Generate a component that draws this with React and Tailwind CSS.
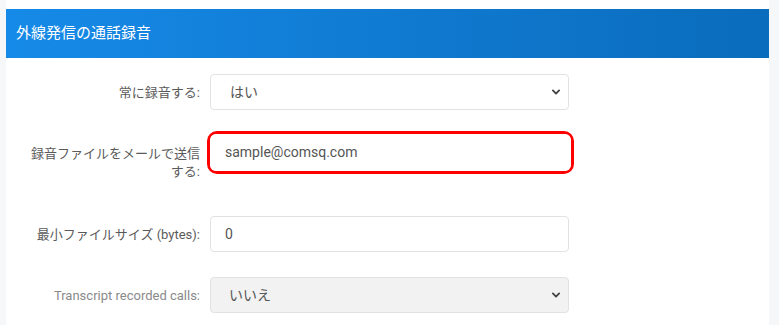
import React from "react";

const Chevron = () => (
  <svg
    className="pointer-events-none absolute right-[8px] top-1/2 h-[10px] w-[10px] -translate-y-1/2 text-[#444]"
    viewBox="0 0 16 16"
    fill="none"
    stroke="currentColor"
    strokeWidth="3"
    strokeLinecap="round"
    strokeLinejoin="round"
  >
    <path d="M3 5.5l5 5 5-5" />
  </svg>
);

function Row({ label, muted, children, className = "" }) {
  return (
    <div className={`flex items-start ${className}`}>
      <label
        className={`w-[194px] shrink-0 pl-[14px] pr-[10px] pt-[10px] text-right text-[13px] leading-[18px] ${
          muted ? "text-[#8a8a8a]" : "text-[#5a5a5a]"
        }`}
      >
        {label}
      </label>
      <div className="w-[359px]">{children}</div>
    </div>
  );
}

export default function App() {
  return (
    <div
      className="h-[325px] w-[779px] overflow-hidden bg-[#f6f7f9] pl-[6px] pr-[10px]"
      style={{ fontFamily: 'Roboto, "Noto Sans CJK JP", sans-serif' }}
    >
      <div className="h-full bg-white pt-[9px]">
        <div className="flex h-[49px] items-center bg-gradient-to-r from-[#168ae8] to-[#0a6cbc] px-[10px] text-[15px] text-white">
          外線発信の通話録音
        </div>

        <div className="pl-[10px] pt-[16px]">
          <Row label="常に録音する:">
            <div className="relative">
              <div className="flex h-[36px] items-center rounded-[4px] border border-[#e2e2e2] bg-white pl-[19px] text-[14px] text-[#555]">
                はい
              </div>
              <Chevron />
            </div>
          </Row>

          <Row label="録音ファイルをメールで送信する:" className="mt-[25px]">
            <div className="-mb-[3px] -ml-[3px] -mr-[5px] -mt-[4px] rounded-[10px] border-[3px] border-[#f00]">
              <div className="flex h-[37px] items-center rounded-[6px] bg-white pl-[15px] text-[14px] text-[#555]">
                sample@comsq.com
              </div>
            </div>
          </Row>

          <Row label="最小ファイルサイズ (bytes):" className="mt-[35px]">
            <div className="flex h-[36px] items-center rounded-[4px] border border-[#e2e2e2] bg-white pl-[14px] text-[14px] text-[#555]">
              0
            </div>
          </Row>

          <Row label="Transcript recorded calls:" muted className="mt-[25px]">
            <div className="relative">
              <div className="flex h-[36px] items-center rounded-[4px] border border-[#e2e2e2] bg-[#f2f2f2] pl-[18px] text-[14px] text-[#555]">
                いいえ
              </div>
              <Chevron />
            </div>
          </Row>
        </div>
      </div>
    </div>
  );
}
